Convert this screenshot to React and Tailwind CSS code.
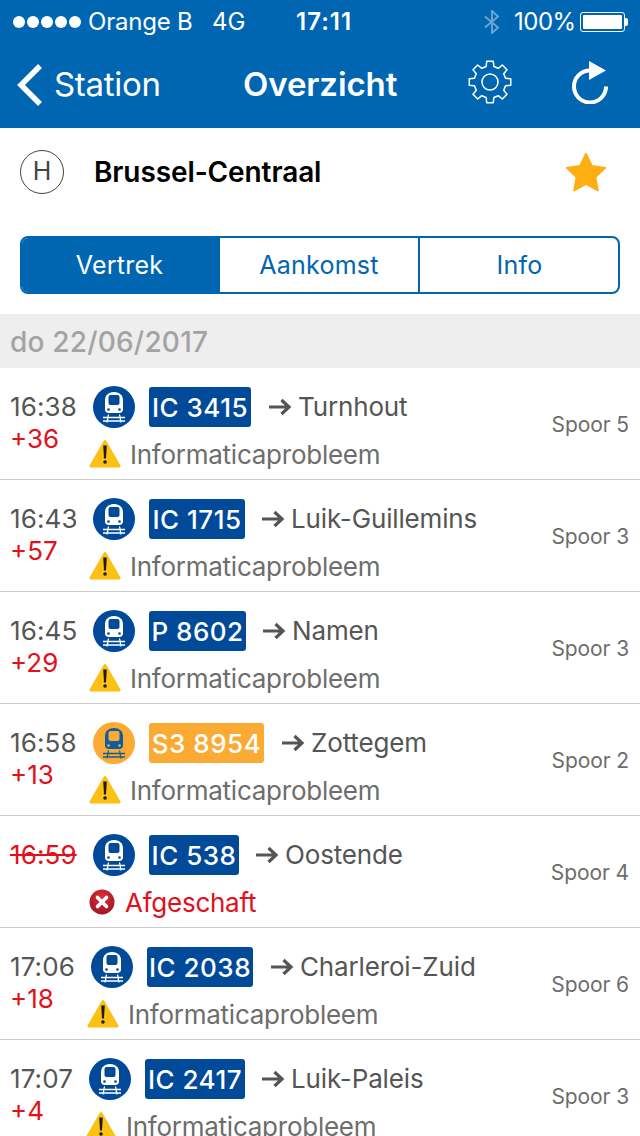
const Train = ({ bg, fg }) => (
  <svg width="42" height="42" viewBox="0 0 42 42" className="shrink-0">
    <circle cx="21" cy="21" r="21" fill={bg} />
    <path d="M12 23.500V14C12 9 16 6 21 6s9 3 9 8v9.500c0 2-1.500 3.500-3.500 3.500h-11C13.500 27 12 25.500 12 23.500z" fill={fg} />
    <rect x="15.500" y="9" width="11" height="10" rx="2" fill={bg} />
    <circle cx="15.500" cy="23.500" r="1.300" fill={bg} />
    <circle cx="26.500" cy="23.500" r="1.300" fill={bg} />
    <path d="M10 31.500h22M10 35h22M15.500 28.500l-1.500 8M26.500 28.500l1.500 8" stroke={fg} strokeWidth="1.300" fill="none" />
  </svg>
);

const Warn = () => (
  <svg width="32" height="30" viewBox="0 0 32 30" className="shrink-0">
    <path d="M16 2.500L30 27H2z" fill="#fbc115" stroke="#fbc115" strokeWidth="3" strokeLinejoin="round" />
    <path d="M14.200 6.500h3.600l-.8 13h-2z" fill="#1f1a10" />
    <circle cx="16" cy="23" r="1.800" fill="#1f1a10" />
  </svg>
);

const Cancel = () => (
  <svg width="26" height="26" viewBox="0 0 26 26" className="shrink-0">
    <defs>
      <radialGradient id="cg" cx="50%" cy="30%" r="75%">
        <stop offset="0%" stopColor="#d8303a" />
        <stop offset="100%" stopColor="#9c1420" />
      </radialGradient>
    </defs>
    <circle cx="13" cy="13" r="12.500" fill="url(#cg)" />
    <path d="M8.500 8.500l9 9M17.500 8.500l-9 9" stroke="#fff" strokeWidth="3.600" strokeLinecap="round" />
  </svg>
);

const gearPath = () => {
  const pts = [];
  const pol = (r, deg) => {
    const a = ((deg - 90) * Math.PI) / 180;
    return `${(22 + r * Math.cos(a)).toFixed(2)} ${(22 + r * Math.sin(a)).toFixed(2)}`;
  };
  for (let i = 0; i < 8; i++) {
    const c = i * 45;
    pts.push(pol(16, c - 14), pol(21, c - 9), pol(21, c + 9), pol(16, c + 14));
  }
  return "M" + pts.join("L") + "Z";
};

const rows = [
  { time: "16:38", delay: "+36", num: "IC 3415", dest: "Turnhout", spoor: 5, col: "w-[67px]", badge: "w-[102px]", arrow: "ml-[17px]" },
  { time: "16:43", delay: "+57", num: "IC 1715", dest: "Luik-Guillemins", spoor: 3, col: "w-[67px]", badge: "w-[96px]", arrow: "ml-[16px]" },
  { time: "16:45", delay: "+29", num: "P 8602", dest: "Namen", spoor: 3, col: "w-[67px]", badge: "w-[97px]", arrow: "ml-[16px]" },
  { time: "16:58", delay: "+13", num: "S3 8954", dest: "Zottegem", spoor: 2, col: "w-[67px]", badge: "w-[115px]", arrow: "ml-[17px]", orange: true },
  { time: "16:59", num: "IC 538", dest: "Oostende", spoor: 4, col: "w-[67px]", badge: "w-[90px]", arrow: "ml-[16px]", cancelled: true },
  { time: "17:06", delay: "+18", num: "IC 2038", dest: "Charleroi-Zuid", spoor: 6, col: "w-[65px]", badge: "w-[106px]", arrow: "ml-[17px]" },
  { time: "17:07", delay: "+4", num: "IC 2417", dest: "Luik-Paleis", spoor: 3, col: "w-[63px]", badge: "w-[100px]", arrow: "ml-[16px]" },
];

const Row = ({ r }) => (
  <div className="h-[112px] shrink-0 border-b border-[#c8c8c8] pl-[10px] pr-[11px] flex">
    <div className={`${r.col} shrink-0 pt-[21px]`}>
      <div className={`h-[36px] leading-[36px] text-[26px] tracking-[0.1px] whitespace-nowrap ${r.cancelled ? "text-[#e2101a] line-through" : "text-[#555555]"}`}>{r.time}</div>
      {r.delay && <div className="h-[28px] leading-[28px] text-[26px] text-[#e2101a]">{r.delay}</div>}
    </div>
    <div className="flex-1 min-w-0 pl-[16px]">
      <div className="flex items-center h-[42px] mt-[18px]">
        <Train bg={r.orange ? "#fbab33" : "#004a99"} fg={r.orange ? "#0c5e9e" : "#ffffff"} />
        <div className={`${r.badge} ml-[14px] h-[40px] rounded-[3px] flex items-center justify-center text-[26px] font-medium tracking-[0.5px] text-white whitespace-nowrap ${r.orange ? "bg-[#fbab33]" : "bg-[#004a99]"}`}>{r.num}</div>
        <svg width="24" height="18" viewBox="0 0 24 18" className={`${r.arrow} shrink-0`}>
          <path d="M1 9h20M13.500 2l7.500 7-7.500 7" stroke="#555555" strokeWidth="3.200" fill="none" />
        </svg>
        <span className="ml-[6px] text-[26px] leading-[44px] tracking-[-0.15px] text-[#555555] whitespace-nowrap">{r.dest}</span>
      </div>
      <div className="flex items-center h-[30px] mt-[11px] -ml-[4px]">
        {r.cancelled ? <Cancel /> : <Warn />}
        <span className={`text-[26px] tracking-[-0.25px] whitespace-nowrap ${r.cancelled ? "ml-[10px] text-[#e2101a]" : "ml-[9px] text-[#6d6d6d]"}`}>{r.cancelled ? "Afgeschaft" : "Informaticaprobleem"}</span>
      </div>
    </div>
    <div className="shrink-0 pt-[41px] text-[21px] leading-[32px] tracking-[-0.1px] text-[#6d6d6d] whitespace-nowrap">Spoor {r.spoor}</div>
  </div>
);

export default function App() {
  return (
    <div className="w-[640px] h-[1136px] overflow-hidden bg-white flex flex-col font-['Inter','Liberation_Sans',sans-serif]">
      <div className="h-[128px] shrink-0 bg-[#0066b1] text-white">
        <div className="h-[44px] flex items-center relative text-[24px] pl-[13px]">
          <div className="flex gap-[2px]">
            {[0, 1, 2, 3, 4].map((i) => <span key={i} className="w-[12px] h-[12px] rounded-full bg-white" />)}
          </div>
          <span className="ml-[7px] tracking-[-0.2px]">Orange B</span>
          <span className="absolute left-[212px]">4G</span>
          <span className="absolute left-[296px] font-semibold tracking-[1px]">17:11</span>
          <svg width="18" height="24" viewBox="0 0 18 24" className="absolute left-[483px]">
            <path d="M2 6.500l13 11-6 5.500V1l6 5.500-13 11" stroke="#6aa3d2" strokeWidth="2" fill="none" />
          </svg>
          <span className="absolute left-[514px] tracking-[-0.5px]">100%</span>
          <div className="absolute left-[580px] w-[45px] h-[20px] rounded-[3px] border border-white p-[2px]">
            <div className="w-full h-full rounded-[1px] bg-white" />
          </div>
          <div className="absolute left-[625px] w-[3px] h-[8px] rounded-r-[2px] bg-white" />
        </div>
        <div className="h-[84px] flex items-center relative pb-[3px]">
          <svg width="28" height="44" viewBox="0 0 28 44" className="ml-[16px]">
            <path d="M24 3L5 22l19 19" stroke="#fff" strokeWidth="5.500" fill="none" />
          </svg>
          <span className="ml-[10px] text-[33px] tracking-[-0.3px]">Station</span>
          <span className="absolute left-[243px] text-[33px] font-semibold tracking-[-0.1px]">Overzicht</span>
          <svg width="44" height="44" viewBox="0 0 44 44" className="absolute left-[468px] top-[16px]">
            <circle cx="22" cy="22" r="8" stroke="#fff" strokeWidth="1.500" fill="none" />
            <path d={gearPath()} stroke="#fff" strokeWidth="1.500" strokeLinejoin="round" fill="none" />
          </svg>
          <svg width="40" height="46" viewBox="0 0 40 46" className="absolute left-[571px] top-[14px]">
            <path d="M19 12.500A16 16 0 1 0 35 28.500" stroke="#fff" strokeWidth="4" fill="none" />
            <path d="M18 3l17 9.500-17 9.500z" fill="#fff" />
          </svg>
        </div>
      </div>

      <div className="h-[88px] shrink-0 flex items-center pb-[1px] pl-[20px] pr-[32px]">
        <div className="w-[44px] h-[44px] rounded-full border border-[#444444] flex items-center justify-center text-[25px] text-[#444444]">H</div>
        <span className="ml-[30px] text-[28px] font-semibold tracking-[-0.1px] text-black">Brussel-Centraal</span>
        <svg width="44" height="42" viewBox="0 0 24 23" className="ml-auto">
          <path d="M12 1.500l3.200 6.700 7.300 1-5.300 5.100 1.300 7.300L12 18.100l-6.500 3.500 1.300-7.300-5.300-5.100 7.300-1z" fill="#fdae11" stroke="#fdae11" strokeWidth="1" strokeLinejoin="round" />
        </svg>
      </div>

      <div className="shrink-0 px-[20px] pt-[20px] pb-[20px]">
        <div className="flex h-[58px] rounded-[8px] border-2 border-[#0066b1] overflow-hidden text-[25px] tracking-[0.25px] text-[#0066b1]">
          <div className="w-[198px] pt-[1px] pr-[3px] bg-[#0066b1] text-white flex items-center justify-center">Vertrek</div>
          <div className="w-[200px] pt-[1px] border-r-2 border-[#0066b1] flex items-center justify-center">Aankomst</div>
          <div className="flex-1 pt-[1px] pl-[1px] flex items-center justify-center">Info</div>
        </div>
      </div>

      <div className="h-[54px] shrink-0 bg-[#eeeeee] flex items-center pl-[10px] pt-[1px] text-[28px] font-medium tracking-[0.2px] text-[#a3a3a3]">do 22/06/2017</div>

      {rows.map((r) => <Row key={r.time} r={r} />)}
    </div>
  );
}
